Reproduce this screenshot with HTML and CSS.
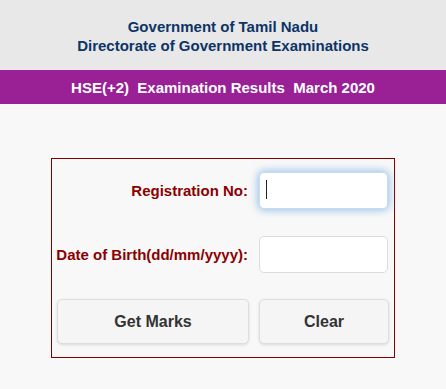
FILE: index.html
```html
<!DOCTYPE html>
<html lang="en">
<head>
<meta charset="utf-8">
<title>HSE(+2) Examination Results March 2020</title>
<link rel="stylesheet" href="styles.css">
</head>
<body>
<header class="top">
  <div class="gov">Government of Tamil Nadu</div>
  <div class="gov">Directorate of Government Examinations</div>
</header>
<div class="band">HSE(+2)&nbsp; Examination Results&nbsp; March 2020</div>
<main class="content">
  <form class="box" onsubmit="return false;">
    <label class="lbl" for="reg">Registration No:</label>
    <div class="fieldwrap">
      <input class="field focused" id="reg" type="text">
      <span class="caret"></span>
    </div>
    <label class="lbl" for="dob">Date of Birth(dd/mm/yyyy):</label>
    <div class="fieldwrap">
      <input class="field" id="dob" type="text">
    </div>
    <button class="btn" type="submit">Get Marks</button>
    <button class="btn" type="reset">Clear</button>
  </form>
</main>
</body>
</html>
```
FILE: styles.css
```css
html, body {
  margin: 0;
  padding: 0;
  background: #f8f8f8;
  font-family: "Liberation Sans", Arial, sans-serif;
}
.top {
  height: 70px;
  background: #e8e8e8;
  display: flex;
  flex-direction: column;
  justify-content: center;
  align-items: center;
  box-sizing: border-box;
  padding-top: 2px;
}
.gov {
  color: #0d3466;
  font-weight: bold;
  font-size: 15px;
  line-height: 19px;
}
.band {
  height: 34px;
  background: #9a2195;
  color: #ffffff;
  font-weight: bold;
  font-size: 15px;
  display: flex;
  align-items: center;
  justify-content: center;
  white-space: pre;
}
.content {
  padding-top: 54px;
  display: flex;
  justify-content: center;
}
.box {
  width: 344px;
  box-sizing: border-box;
  border: 1px solid #800000;
  padding: 13px 5px 13px 5px;
  display: grid;
  grid-template-columns: 192px 130px;
  column-gap: 10px;
  row-gap: 27px;
}
.lbl {
  align-self: center;
  justify-self: end;
  white-space: nowrap;
  text-align: right;
  color: #8b0000;
  font-weight: bold;
  font-size: 15px;
  padding-right: 1px;
}
.fieldwrap {
  position: relative;
  height: 37px;
}
.field {
  display: block;
  height: 37px;
  width: 129px;
  box-sizing: border-box;
  border: 1px solid #dcdcdc;
  border-radius: 5px;
  background: #ffffff;
  padding: 0 6px;
  font-size: 15px;
  font-family: "Liberation Sans", Arial, sans-serif;
  outline: none;
}
.focused {
  border-color: #c6dcef;
  box-shadow: 0 0 8px 1px rgba(102, 165, 225, 0.7);
}
.caret {
  position: absolute;
  left: 7px;
  top: 8px;
  width: 1px;
  height: 19px;
  background: #222222;
}
.btn {
  height: 45px;
  border: 1px solid #dddddd;
  border-radius: 5px;
  background: #f5f5f5;
  color: #333333;
  font-weight: bold;
  font-size: 16px;
  font-family: "Liberation Sans", Arial, sans-serif;
  box-shadow: 0 1px 3px rgba(0, 0, 0, 0.12);
  margin-top: -1px;
}
```
